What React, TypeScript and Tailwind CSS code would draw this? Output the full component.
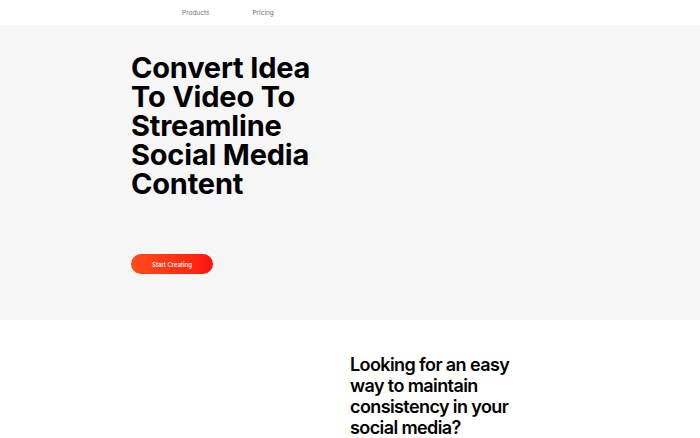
export default function App() {
  return (
    <div className="min-h-screen bg-white font-['Inter',sans-serif] text-black">
      <header className="h-[25px] bg-white flex items-center pt-[2px]">
        <nav className="flex items-center pl-[182px] gap-[43px] text-[6.5px] text-gray-500">
          <a href="#">Products</a>
          <a href="#">Pricing</a>
        </nav>
      </header>

      <section className="bg-[#f6f6f6] h-[295px] pl-[131px] pt-[28px]">
        <h1 className="text-[29px] leading-[29px] font-bold tracking-[-0.2px] w-[200px]">
          Convert Idea To Video To Streamline Social Media Content
        </h1>
        <button className="mt-[56px] h-[20px] w-[82px] rounded-full bg-gradient-to-r from-[#ff4a1c] to-[#ff0f0f] text-white text-[6px] font-medium">
          Start Creating
        </button>
      </section>

      <section className="grid grid-cols-2 pt-[34px]">
        <div />
        <h2 className="text-[18px] leading-[21px] font-semibold tracking-[-0.6px] w-[172px]">
          Looking for an easy way to maintain consistency in your social media?
        </h2>
      </section>
    </div>
  );
}
